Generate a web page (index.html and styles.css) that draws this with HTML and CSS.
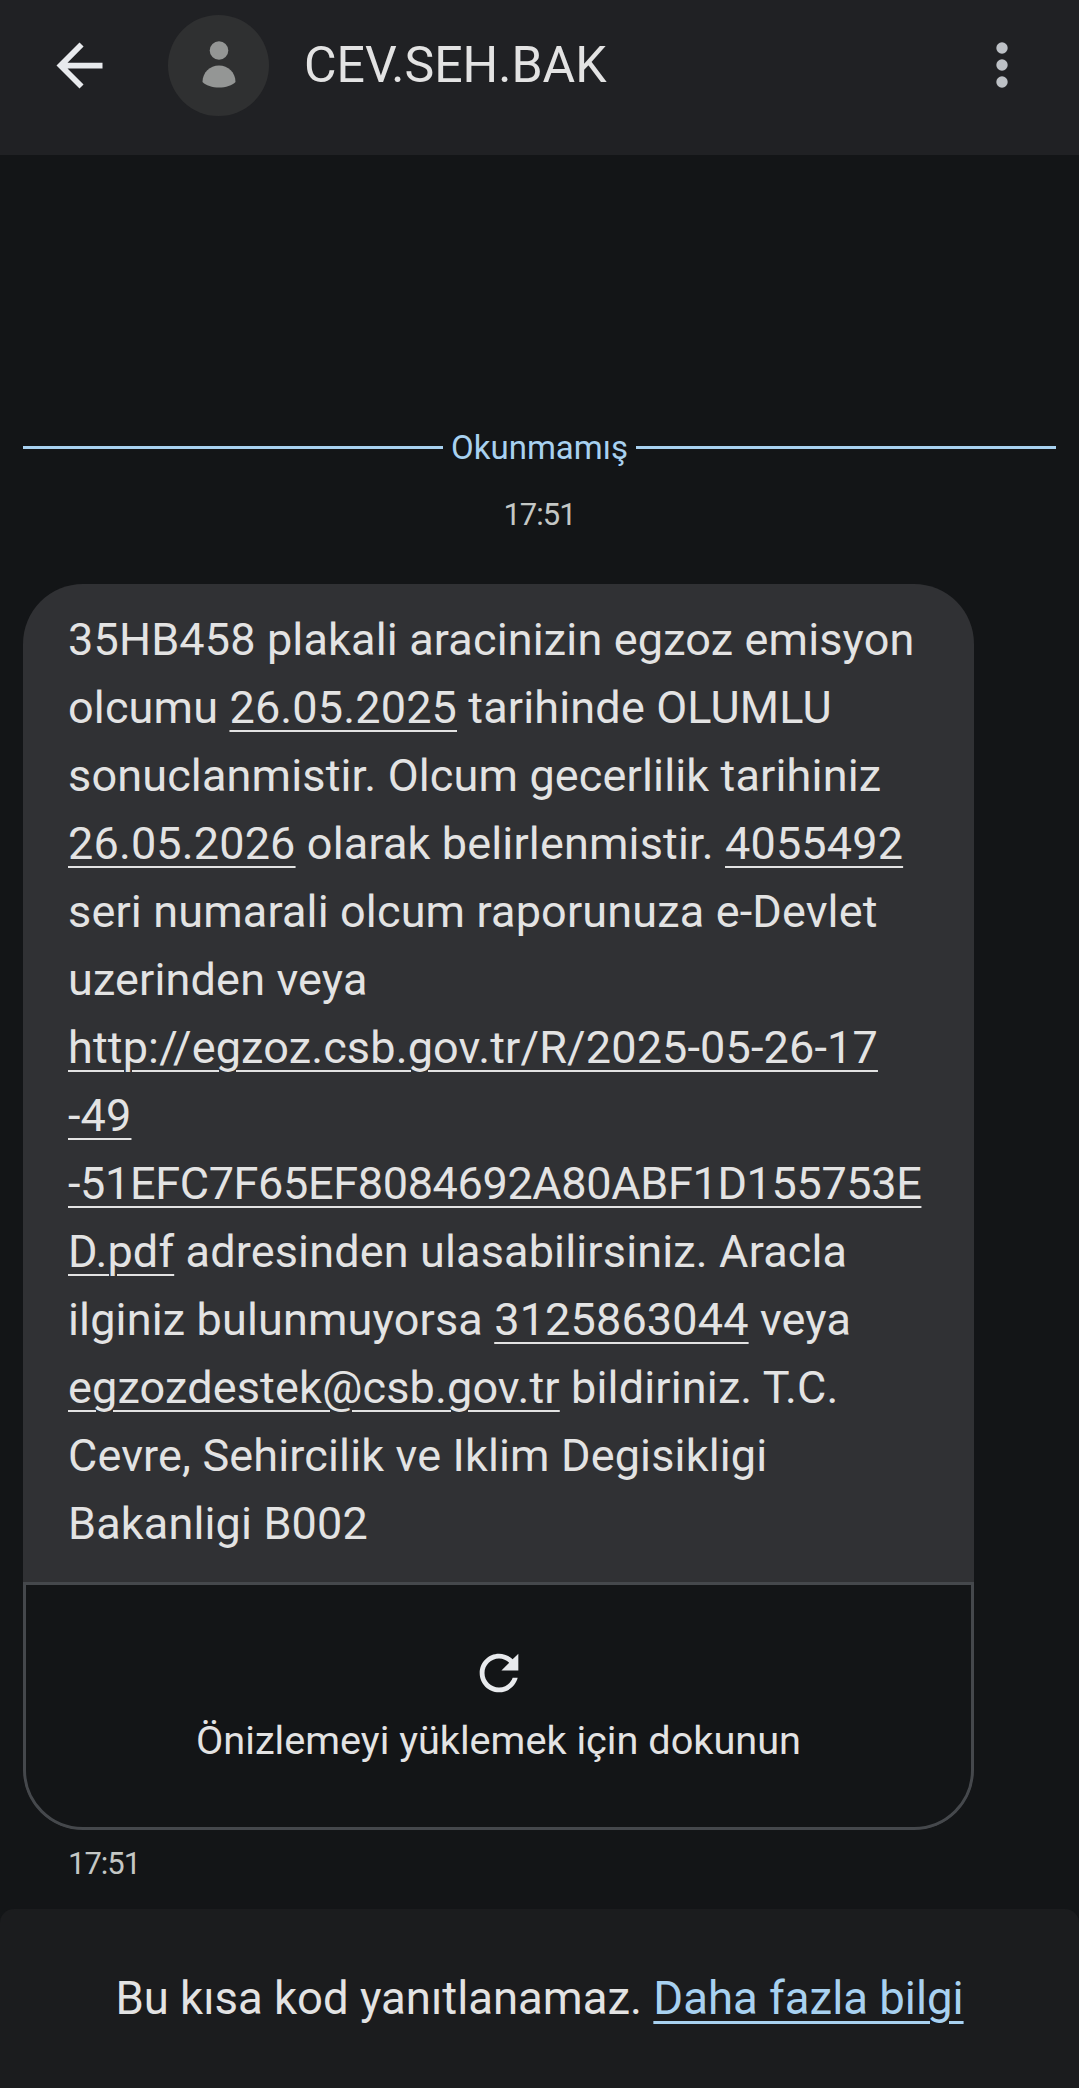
FILE: index.html
```html
<!doctype html>
<html>
<head>
<meta charset="UTF-8">
<title>CEV.SEH.BAK</title>
<link rel="stylesheet" href="styles.css">
</head>

<body>
  <header class="topbar">
    <svg class="back-icon" viewBox="0 0 24 24"><path d="M20 11H7.83l5.59-5.59L12 4l-8 8 8 8 1.41-1.41L7.83 13H20v-2z"/></svg>
    <div class="avatar">
      <svg class="avatar-icon" viewBox="0 0 52 52"><circle cx="26" cy="11.5" r="9.3"/><path d="M9.5 43c0-9.5 7.4-16.5 16.5-16.5S42.5 33.5 42.5 43c-3 3.5-10 5.5-16.5 5.5S12.5 46.5 9.5 43z"/></svg>
    </div>
    <div class="title">CEV.SEH.BAK</div>
    <svg class="menu-icon" viewBox="0 0 24 24"><circle cx="12" cy="4.95" r="2.35"/><circle cx="12" cy="12" r="2.35"/><circle cx="12" cy="19.05" r="2.35"/></svg>
  </header>

  <main class="thread">
    <div class="unread">
      <span class="unread-line"></span>
      <span class="unread-label">Okunmamış</span>
      <span class="unread-line"></span>
    </div>
    <div class="stamp">17:51</div>

    <div class="bubble">
      <p class="bubble-text">35HB458 plakali aracinizin egzoz emisyon<br>
olcumu <a href="#">26.05.2025</a> tarihinde OLUMLU<br>
sonuclanmistir. Olcum gecerlilik tarihiniz<br>
<a href="#">26.05.2026</a> olarak belirlenmistir. <a href="#">4055492</a><br>
seri numarali olcum raporunuza e-Devlet<br>
uzerinden veya<br>
<a href="#">http://egzoz.csb.gov.tr/R/2025-05-26-17</a><br>
<a href="#">-49</a><br>
<a href="#" class="hash-link">-51EFC7F65EF8084692A80ABF1D155753E</a><br>
<a href="#">D.pdf</a> adresinden ulasabilirsiniz. Aracla<br>
ilginiz bulunmuyorsa <a href="#">3125863044</a> veya<br>
<a href="#">egzozdestek@csb.gov.tr</a> bildiriniz. T.C.<br>
Cevre, Sehircilik ve Iklim Degisikligi<br>
Bakanligi B002</p>
      <div class="preview">
        <svg class="refresh-icon" viewBox="0 0 24 24"><path d="M17.65 6.35C16.2 4.9 14.21 4 12 4c-4.42 0-7.99 3.58-7.99 8s3.57 8 7.99 8c3.73 0 6.84-2.55 7.73-6h-2.08c-.82 2.33-3.04 4-5.65 4-3.31 0-6-2.69-6-6s2.69-6 6-6c1.66 0 3.14.69 4.22 1.78L13 11h7V4l-2.35 2.35z"/></svg>
        <div class="preview-label">Önizlemeyi yüklemek için dokunun</div>
      </div>
    </div>
    <div class="msg-time">17:51</div>
  </main>

  <footer class="notice">
    <span>Bu kısa kod yanıtlanamaz. <a href="#">Daha fazla bilgi</a></span>
  </footer>
</body>
</html>
```

FILE: styles.css
```css
html, body {
  height: 100%;
}
body {
  margin: 0;
  background-color: #131517;
  color: #e3e3e3;
  font-family: Roboto, "Noto Sans", sans-serif;
  display: flex;
  flex-direction: column;
  overflow: hidden;
}
a {
  color: inherit;
  text-decoration: underline;
  text-decoration-thickness: 2px;
  text-underline-offset: 7px;
}

/* top bar */
.topbar {
  height: 155px;
  padding-bottom: 25px;
  box-sizing: border-box;
  background-color: #202124;
  display: flex;
  align-items: center;
  flex: none;
}
.back-icon {
  width: 69px;
  height: 69px;
  margin-left: 45px;
  fill: #e8eaed;
  flex: none;
}
.avatar {
  width: 101px;
  height: 101px;
  margin-left: 54px;
  border-radius: 50%;
  background-color: #2f3031;
  display: flex;
  align-items: center;
  justify-content: center;
  flex: none;
}
.avatar-icon {
  width: 52px;
  height: 52px;
  fill: #949695;
}
.title {
  margin-left: 35px;
  font-size: 50px;
  color: #e3e3e3;
  flex: 1;
}
.menu-icon {
  width: 58px;
  height: 58px;
  margin-right: 48px;
  fill: #bdc1c6;
  flex: none;
}

/* messages */
.thread {
  flex: 1;
  padding-top: 270px;
}
.unread {
  margin: 0 23px;
  height: 44px;
  display: flex;
  align-items: center;
  gap: 8px;
  color: #a8d1f0;
  font-size: 33px;
}
.unread-line {
  flex: 1;
  height: 3px;
  background-color: #a8d1f0;
}
.stamp {
  margin-top: 24px;
  text-align: center;
  font-size: 31px;
  letter-spacing: -1px;
  line-height: 44px;
  color: #c4c7c5;
}
.bubble {
  width: 951px;
  margin: 47px 0 0 23px;
  border-radius: 60px;
  background-color: #303134;
  overflow: hidden;
}
.bubble-text {
  margin: 0;
  padding: 22px 20px 24px 45px;
  font-size: 45px;
  letter-spacing: 0.15px;
  line-height: 68px;
  white-space: nowrap;
}
.hash-link {
  letter-spacing: -0.35px;
}
.preview {
  height: 248px;
  box-sizing: border-box;
  padding-top: 59px;
  background-color: #131517;
  border: 3px solid #45484c;
  border-radius: 0 0 60px 60px;
  display: flex;
  flex-direction: column;
  align-items: center;
}
.refresh-icon {
  width: 58px;
  height: 58px;
  fill: #e8eaed;
}
.preview-label {
  margin-top: 14px;
  font-size: 39.7px;
  line-height: 50px;
}
.msg-time {
  margin: 12px 0 0 68px;
  font-size: 31px;
  letter-spacing: -1px;
  line-height: 44px;
  color: #c4c7c5;
}

/* bottom notice */
.notice {
  height: 179px;
  flex: none;
  border-radius: 14px 14px 0 0;
  background-color: #1b1c1e;
  display: flex;
  align-items: center;
  justify-content: center;
  font-size: 45.5px;
}
.notice a {
  color: #a8d1f0;
  text-decoration-thickness: 3px;
}
```
